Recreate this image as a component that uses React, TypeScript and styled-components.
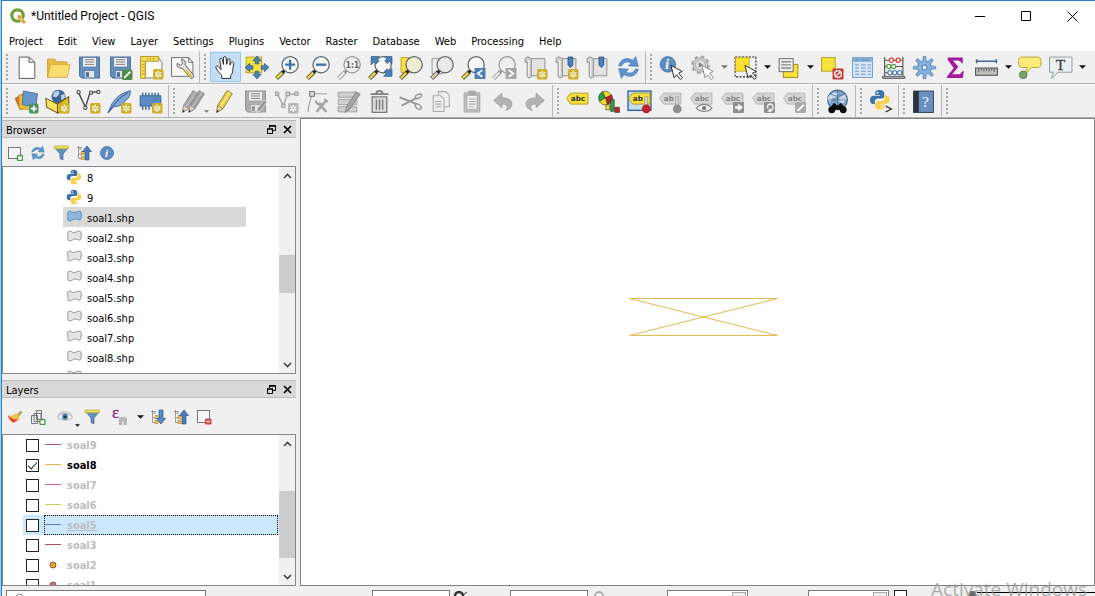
import React from "react";
import styled, { createGlobalStyle, css } from "styled-components";

const Global = createGlobalStyle`
  *, *::before, *::after { box-sizing: border-box; }
  body { margin: 0; background: #f0f0f0; overflow: hidden; }
  button, input { font: inherit; color: inherit; margin: 0; padding: 0; border: 0; background: none; }
  ul { list-style: none; margin: 0; padding: 0; }
  svg { display: block; flex: none; }
`;

/* ---------- layout ---------- */

const Desktop = styled.div`
  height: 100vh;
  padding-left: 1px;
  background: #9fd0f0;
  font: 11px/14px "DejaVu Sans Condensed", "DejaVu Sans", sans-serif;
  color: #000;
`;
const AppWindow = styled.div`
  position: relative;
  height: 100%;
  display: flex;
  flex-direction: column;
  background: #f0f0f0;
  border-left: 1px solid #2f80c4;
  border-top: 1px solid #2f7abf;
  overflow: hidden;
`;
const TitleBar = styled.header`
  flex: none;
  height: 30px;
  display: flex;
  align-items: center;
  gap: 5px;
  padding-left: 8px;
  background: #fff;
`;
const Title = styled.h1`
  flex: 1;
  margin: 0;
  font: 400 12px/16px Roboto, "Open Sans", sans-serif;
`;
const WindowButtons = styled.div`
  display: flex;
`;
const WindowButton = styled.button`
  width: 46px;
  height: 30px;
  display: grid;
  place-items: center;
`;
const MenuBar = styled.nav`
  flex: none;
  height: 19px;
  display: flex;
  align-items: center;
  gap: 15px;
  padding: 2px 0 0 7px;
  background: #fff;
`;
const ToolRow = styled.div`
  flex: none;
  height: 34px;
  display: flex;
  border-top: 1px solid #f8f8f8;
  border-bottom: 1px solid #b4b4b4;
`;
const Handle = styled.span`
  width: 10px;
  height: 28px;
  background: radial-gradient(circle, #a8a8a8 1px, transparent 1px) 3px 0 / 4px 4px repeat-y;
`;
const ToolGroup = styled.div<{ $last?: boolean; $tight?: boolean }>`
  display: flex;
  align-items: center;
  padding-right: ${(p) => (p.$tight ? 2 : 1)}px;
  border-right: ${(p) => (p.$last ? "0" : "1px solid #b8b8b8")};
  ${Handle} { width: ${(p) => (p.$tight ? 9 : 10)}px; }
`;
const ToolButton = styled.button<{ $on?: boolean }>`
  position: relative;
  width: 31px;
  height: 30px;
  display: grid;
  place-items: center;
  ${(p) => p.$on && css`background: #c4dff5; border: 1px solid #97c7ec;`}
`;
const ArrowButton = styled.button`
  width: 12px;
  height: 30px;
  display: grid;
  place-items: center;
`;
const CornerArrow = styled.span`
  position: absolute;
  right: 0;
  bottom: 3px;
`;
const Main = styled.main`
  flex: 1;
  min-height: 0;
  display: flex;
  gap: 4px;
`;
const DockColumn = styled.aside`
  flex: none;
  width: 294px;
  display: flex;
  flex-direction: column;
  gap: 6px;
  padding-top: 2px;
`;
const Dock = styled.section<{ $grow: number }>`
  flex: ${(p) => p.$grow} 1 0;
  min-height: 0;
  display: flex;
  flex-direction: column;
`;
const DockHeader = styled.div`
  flex: none;
  height: 18px;
  display: flex;
  align-items: center;
  padding: 0 1px 0 4px;
  background: #d9d9d9;
  border-top: 1px solid #b9b9b9;
  border-bottom: 1px solid #bdbdbd;
`;
const DockTitle = styled.h2`
  flex: 1;
  margin: 0;
  padding-top: 3px;
  font-size: 11px;
  line-height: 14px;
  font-weight: 400;
`;
const DockButton = styled.button`
  width: 16px;
  height: 16px;
  display: grid;
  place-items: center;
`;
const DockTools = styled.div<{ $h: number }>`
  flex: none;
  height: ${(p) => p.$h}px;
  display: flex;
  align-items: center;
  padding: 1px 0 0 1px;
`;
const SmallButton = styled.button<{ $wide?: boolean }>`
  position: relative;
  width: ${(p) => (p.$wide ? 31 : 23)}px;
  height: 26px;
  display: grid;
  place-items: center;
`;
const TreeFrame = styled.div`
  flex: 1;
  min-height: 0;
  display: flex;
  border: 1px solid #828790;
  background: #fff;
`;
const TreeList = styled.ul`
  flex: 1;
  overflow: hidden;
`;
const FileRow = styled.li<{ $selected?: boolean }>`
  height: 20px;
  width: 183px;
  margin-left: 60px;
  padding-left: 3px;
  display: flex;
  align-items: center;
  gap: 5px;
  background: ${(p) => (p.$selected ? "#d9d9d9" : "transparent")};
  span { padding-top: 3px; }
`;
const LayerRow = styled.li<{ $current?: boolean }>`
  height: 20px;
  margin-left: 20px;
  padding: 0 1px 0 3px;
  display: flex;
  align-items: center;
  gap: 5px;
  background: ${(p) => (p.$current ? "#cce8ff" : "transparent")};
`;
const LayerLabel = styled.label<{ $current?: boolean; $visible?: boolean }>`
  flex: 1;
  height: 20px;
  display: flex;
  align-items: center;
  gap: 6px;
  border: 1px ${(p) => (p.$current ? "dotted #000" : "solid transparent")};
  font-weight: 700;
  color: ${(p) => (p.$visible ? "#000" : "#bdbdbd")};
  text-decoration: ${(p) => (p.$current ? "underline" : "none")};
  span { padding-top: 2px; }
`;
const Check = styled.input`
  appearance: none;
  flex: none;
  width: 13px;
  height: 13px;
  border: 1px solid #222;
  background: #fff;
  display: grid;
  place-items: center;
  &:checked::after {
    content: "";
    width: 5px;
    height: 9px;
    margin-bottom: 3px;
    border: solid #222;
    border-width: 0 1px 1px 0;
    transform: rotate(42deg);
  }
`;
const Scroll = styled.div`
  flex: none;
  width: 16px;
  display: flex;
  flex-direction: column;
  align-items: center;
  padding: 6px 0 5px;
  background: #f0f0f0;
`;
const Track = styled.div<{ $before: number; $thumb: number; $after: number }>`
  flex: 1;
  width: 100%;
  display: grid;
  grid-template-rows: ${(p) => `${p.$before}fr ${p.$thumb}fr ${p.$after}fr`};
  &::before { content: ""; }
`;
const Thumb = styled.div`
  background: #cdcdcd;
`;
const Canvas = styled.section`
  position: relative;
  flex: 1;
  background: #fff;
  border: 1px solid #828282;
`;
const Feature = styled.svg`
  position: absolute;
  left: 328px;
  top: 178px;
`;
const StatusBar = styled.footer`
  flex: none;
  height: 10px;
  padding: 4px 0 0 4px;
  display: flex;
  align-items: flex-start;
  overflow: hidden;
`;
const Field = styled.input<{ $w: number; $gap?: number }>`
  flex: none;
  width: ${(p) => p.$w}px;
  height: 20px;
  margin-left: ${(p) => p.$gap || 0}px;
  background: #fff;
  border: 1px solid #7a7a7a;
`;
const Messages = styled.button`
  flex: 1;
  height: 18px;
  margin-top: 2px;
  border-top: 1px solid #000;
`;
const Spin = styled.div<{ $gap: number }>`
  flex: none;
  width: 81px;
  height: 20px;
  margin-left: ${(p) => p.$gap}px;
  display: flex;
  padding: 1px;
  background: #fff;
  border: 1px solid #7a7a7a;
  input { flex: 1; min-width: 0; }
  button { width: 14px; height: 10px; border: 1px solid #aaa; background: #eee; display: grid; place-items: center; }
`;
const StatusIcon = styled.span<{ $gap: number }>`
  flex: none;
  margin-left: ${(p) => p.$gap}px;
`;
const LocatorWrap = styled.label`
  flex: none;
  width: 200px;
  height: 20px;
  padding: 2px 8px;
  display: flex;
  background: #fff;
  border: 1px solid #7a7a7a;
  input { flex: 1; min-width: 0; }
`;
const Watermark = styled.div`
  position: absolute;
  right: 8px;
  bottom: -6px;
  font: 400 19px/26px "Open Sans", "Noto Sans", sans-serif;
  color: rgba(150, 150, 150, 0.75);
  pointer-events: none;
`;

/* ---------- shared icon parts ---------- */

type Kids = { children?: React.ReactNode };
const I = ({ children }: Kids) => (
  <svg width="25" height="25" viewBox="0 0 24 24" fill="none" aria-hidden="true">{children}</svg>
);
const S = ({ children }: Kids) => (
  <svg width="16" height="16" viewBox="0 0 16 16" fill="none" aria-hidden="true">{children}</svg>
);
const Down = ({ c = "#111", s = 7 }: { c?: string; s?: number }) => (
  <svg width={s} height={s === 7 ? 4 : 3} viewBox="0 0 8 4" aria-hidden="true"><path d="M0 0h8L4 4z" fill={c} /></svg>
);
const New = ({ gray }: { gray?: boolean }) => (
  <g>
    <rect x="13.500" y="13.500" width="10" height="10" rx="1.500" fill={gray ? "#b5b5b5" : "#cfb02a"} />
    <path d="M18.500 15v7M15.500 16.800l6 3.500M21.500 16.800l-6 3.500" stroke="#fff" strokeWidth="1.300" />
    <circle cx="18.500" cy="18.500" r="1" fill={gray ? "#b5b5b5" : "#cfb02a"} />
  </g>
);
const Lens = ({ handle = "#edd33c", ring = "#5d6468", fill = "#f6f8f8" }: { handle?: string; ring?: string; fill?: string }) => (
  <g>
    <path d="M1.500 22.500l6.500-6.500" stroke={ring === "#5d6468" ? "#555" : ring} strokeWidth="4" />
    <path d="M1.800 22.200l6.200-6.200" stroke={handle} strokeWidth="2.400" />
    <path d="M7 17l2.500-2.500" stroke={ring === "#5d6468" ? "#222" : ring} strokeWidth="2.800" />
    <circle cx="14.500" cy="9.300" r="7.800" fill={fill} stroke={ring} strokeWidth="1.200" />
  </g>
);
const Floppy = ({ c, d }: { c: string; d: string }) => (
  <g>
    <path d="M2.500 2h19v20H4.500l-2-2z" fill={c} stroke={d} />
    <rect x="5.500" y="2.500" width="13" height="9" fill="#f2f2f2" stroke={d} strokeWidth=".6" />
    <path d="M7.500 4.500h9M7.500 6.700h9M7.500 9h9" stroke="#777" strokeWidth=".9" />
    <rect x="7" y="15" width="10" height="7" fill="#e4e4e4" stroke={d} strokeWidth=".6" />
    <rect x="8.500" y="16.500" width="3" height="4.500" fill={d} />
  </g>
);
const Pencil = ({ c = "#e7cf3c", l = "#f6ea9a", e = "#8a7a20" }: { c?: string; l?: string; e?: string }) => (
  <g>
    <path d="M4.500 22.500l1-7L14.500 1.500l5 3L10.500 19z" fill={c} stroke={e} strokeWidth=".8" />
    <path d="M8 17L17 3.200" stroke={l} strokeWidth="1.500" />
    <path d="M4.500 22.500l1-7 5 3.500z" fill="#ddd2b8" stroke={e} strokeWidth=".6" />
    <path d="M4.500 22.500l.4-2.400 1.700 1z" fill="#222" />
  </g>
);
const Refresh = () => (
  <g fill="#5b93cd" stroke="#3f76b0" strokeWidth=".5">
    <path d="M2.500 10.500C4 4 10.500 1.500 16 5l3-3.500 2.500 9.500-9.500-.5 2.500-3C11 5.800 6.500 7 5.500 10.500z" />
    <path d="M21.500 13.500C20 20 13.500 22.500 8 19l-3 3.500L2.500 13l9.500.5-2.500 3c3.500 1.700 8 .5 9-3z" />
  </g>
);
const Python = () => (
  <g>
    <path d="M11.800 1C8 1 7 2.500 7 4.500v2.300h5.300v.8H5C2.700 7.600 1 9.500 1 12s1.500 4.800 3.500 4.800h2v-3.100c0-1.900 1.600-3.200 3.300-3.200h4.600c1.500 0 2.600-1.200 2.600-2.700V4.500c0-2-1.800-3.500-5.200-3.500z" fill="#3c74a8" />
    <path d="M12.200 23c3.800 0 4.800-1.500 4.800-3.500v-2.300h-5.300v-.8H19c2.300 0 4-1.900 4-4.400s-1.500-4.800-3.500-4.800h-2v3.100c0 1.900-1.600 3.200-3.300 3.200H9.600C8.100 13.500 7 14.700 7 16.200v3.300c0 2 1.800 3.500 5.200 3.500z" fill="#fbd148" />
    <circle cx="9.600" cy="4.200" r="1" fill="#fff" /><circle cx="14.400" cy="19.800" r="1" fill="#fff" />
  </g>
);
const Roll = () => (
  <g>
    <path d="M4.500 3.500H21V20H6z" fill="#e2e2e0" stroke="#8b8b8b" strokeWidth=".9" />
    <path d="M4.500 2C3 2 2 2.800 2 4v3h2v13c0 1.300.8 2 2 2s2-.7 2-2V4.500C8 3 6.500 2 4.500 2z" fill="#d0d0ce" stroke="#8b8b8b" strokeWidth=".9" />
    <path d="M5.500 5v15" stroke="#f3f3f3" strokeWidth="1.200" />
  </g>
);
const Mark = () => <path d="M13.500 2h4.500v7c0 1.300-1 1.500-2.250 3-1.250-1.500-2.250-1.700-2.250-3z" fill="#4a80bc" stroke="#29527e" strokeWidth=".9" />;
const Tag = ({ gray, word = "abc" }: { gray?: boolean; word?: string }) => (
  <g>
    <path d="M1.500 9l4-5h16.500v10.500H5.500z" fill={gray ? "#d6d6d6" : "#f4e13a"} stroke={gray ? "#b2b2b2" : "#b39c16"} strokeWidth=".9" />
    <text x="5.500" y="11.700" fontSize="7" fontWeight="700" fontFamily="DejaVu Sans, sans-serif" fill={gray ? "#868686" : "#333"}>{word}</text>
  </g>
);
const Pin = ({ c }: { c: string }) => <g><path d="M17 7.500v8h2.500v-8z" fill="#ddd" stroke="#888" strokeWidth=".6" /><circle cx="18.500" cy="19" r="4.200" fill={c} /></g>;
const Cursor = ({ c = "#222" }: { c?: string }) => <path d="M11.500 10l3 12 2.400-3 3.600 4.500 2-1.700-3.700-4.500 3.500-1.500z" fill="#fff" stroke={c} strokeWidth=".9" />;
const Arrow8 = ({ d }: { d: string }) => <path d={d} fill="#4c7fb3" stroke="#2e5c8a" strokeWidth=".7" />;

/* ---------- toolbar icons ---------- */

const icons: Record<string, React.ReactNode> = {
  new: <path d="M4 2h9.500L19 7v15.500H4zM13.500 2v5H19" fill="#fff" stroke="#555" strokeWidth=".9" />,
  open: <g><path d="M1.500 21.500V4h7L10 6.500h10v3H4.500z" fill="#e9bd48" stroke="#c99a2c" strokeWidth=".8" /><path d="M1.500 21.500L4.500 9h18.500l-2.500 12.500z" fill="#fbdc70" stroke="#d2a838" strokeWidth=".8" /></g>,
  save: <Floppy c="#6490bf" d="#476f9b" />,
  saveAs: <g><Floppy c="#6490bf" d="#476f9b" /><rect x="13.500" y="14" width="10" height="10" rx="1.500" fill="#4e8a4b" /><path d="M15.500 22l6-6" stroke="#fff" strokeWidth="1.800" /></g>,
  layout: <g><path d="M6 3h13l3 4v15H6z" fill="#fff" stroke="#666" strokeWidth=".8" /><path d="M1.500 1.500H19V6H6v16.500H1.500z" fill="#f5dc57" stroke="#b39521" strokeWidth=".9" /><path d="M3 6h2M3 9h2M3 12h2M3 15h2M3 18h2M8 3v2M11 3v2M14 3v2" stroke="#a3861d" strokeWidth=".7" /><New /></g>,
  layouts: <g><path d="M1.500 2.500H18l4 4.500v13.500h-20.500z" fill="#fafafa" stroke="#555" strokeWidth=".8" /><path d="M18 2.500V7h4" stroke="#555" strokeWidth=".8" /><path d="M11 4c3 0 4.500 3 3.500 5.500l8 9.500c1.300 2-1.200 4.500-3 3l-8-9.500C8 13 6 10.500 7 8l3 2 2-2z" fill="#e2e2e2" stroke="#555" strokeWidth=".9" /><path d="M15 14.500l6 7" stroke="#dcc64a" strokeWidth="2.700" /></g>,
  hand: <path d="M8.500 22.500v-3C6 17.500 4 14.500 2.800 12.300c-.7-1.500 1.300-2.500 2.300-1.200L7.800 14 6.500 4.500C6.300 2.700 8.500 2.500 8.900 4.200L10 9V2.800c0-1.800 2.500-1.800 2.600 0L13.200 9l.8-4.500c.3-1.600 2.500-1.300 2.400.4L16.200 9.700l1.400-2.500c.8-1.500 2.600-.6 2.200.9L19 14c0 2.500-.8 4.500-2 5.500v3z" fill="#fff" stroke="#222" strokeWidth=".9" />,
  panSel: <g><rect x="2" y="2" width="15" height="15" fill="#f5e23e" stroke="#b09a1a" strokeWidth=".8" /><Arrow8 d="M12.500 1l4 4.500h-2.300v3h-3.400v-3H8.500zM12.500 23l4-4.500h-2.300v-3h-3.400v3H8.500zM1 12l4.500-4v2.300h3v3.400h-3V16zM24 12l-4.500-4v2.300h-3v3.400h3V16z" /></g>,
  zoomIn: <g><Lens /><path d="M14.500 4.500v9.600M9.700 9.300h9.600" stroke="#3f74ad" strokeWidth="2.200" /></g>,
  zoomOut: <g><Lens /><path d="M9.500 9.300h10" stroke="#3f74ad" strokeWidth="2.300" /></g>,
  zoomNative: <g><Lens handle="#eee" ring="#999" fill="#eee" /><text x="8.500" y="12.500" fontSize="8" fontWeight="700" fontFamily="DejaVu Sans Condensed, sans-serif" fill="#666">1:1</text></g>,
  zoomFull: <g><Lens /><Arrow8 d="M3 1.500h8L8.700 3.700l2 2-3 3-2-2L3 9.500zM23 1.500h-7l2 2.200-2 2 2.500 2.500 2-2L23 8.500zM23 20.500h-8l2.300-2.200-2-2 3-3 2 2 2.700-2.300z" /></g>,
  zoomSel: <g><path d="M2 2.500h10V17H2z" fill="#f5e23e" stroke="#b09a1a" strokeWidth=".8" /><Lens fill="#efecd2" /></g>,
  zoomLayer: <g><path d="M2 3.500h10V18H2z" fill="#eee" stroke="#888" strokeWidth=".8" /><Lens handle="#e3cfae" fill="#e9e9e9" /></g>,
  zoomLast: <g><Lens /><rect x="13" y="12.500" width="10.500" height="10.500" fill="#4b7db5" /><path d="M20.500 14.500l-4.500 3.200 4.500 3.200" stroke="#fff" strokeWidth="1.700" /></g>,
  zoomNext: <g><Lens handle="#eee" ring="#999" fill="#eee" /><rect x="13" y="12.500" width="10.500" height="10.500" fill="#a5a5a5" /><path d="M16 14.500l4.500 3.200-4.500 3.200" stroke="#fff" strokeWidth="1.700" /></g>,
  newMap: <g><Roll /><New /></g>,
  newBook: <g><Roll /><Mark /><New /></g>,
  books: <g><Roll /><Mark /></g>,
  refresh: <Refresh />,
  identify: <g><circle cx="8.500" cy="9" r="7.500" fill="#5c8cc4" stroke="#3f6ca0" strokeWidth=".6" /><text x="6" y="13.500" fontSize="13" fontStyle="italic" fontWeight="700" fontFamily="Liberation Serif, serif" fill="#fff">i</text><Cursor /></g>,
  action: <g><circle cx="10" cy="9.500" r="8" stroke="#a8a8a8" strokeWidth="2" strokeDasharray="3.500 2.783" /><circle cx="10" cy="9.500" r="7" fill="#d2d2d2" stroke="#a0a0a0" strokeWidth=".9" /><circle cx="10" cy="9.500" r="4.800" fill="#e2e2e2" stroke="#a0a0a0" strokeWidth=".9" /><path d="M8.300 6.800l4.500 2.700-4.500 2.700z" fill="#888" /><Cursor c="#888" /></g>,
  select: <g><rect x="2" y="2" width="20" height="19" stroke="#222" strokeDasharray="2 1.300" /><rect x="2.500" y="2.500" width="13" height="13" fill="#f7df2b" stroke="#b19a18" strokeWidth=".6" /><Cursor /></g>,
  selectForm: <g><rect x="7" y="9" width="14" height="12.500" fill="#f7e13a" stroke="#a08c15" strokeWidth=".9" /><rect x="3" y="3.500" width="13.500" height="12.500" fill="#eef0f0" stroke="#666" strokeWidth=".9" /><path d="M5 6.500h9.500M5 9.500h9.500M5 12.500h9.500" stroke="#888" strokeWidth="1.300" /></g>,
  deselect: <g><rect x="2.500" y="2.500" width="13" height="13" fill="#f8e33c" stroke="#b39b18" strokeWidth=".9" /><rect x="13" y="13" width="10.500" height="10.500" rx="1" fill="#cf3439" /><circle cx="18.250" cy="18.250" r="3.200" stroke="#fff" strokeWidth="1.300" /><path d="M16 20.500l4.500-4.500" stroke="#fff" strokeWidth="1.300" /></g>,
  table: <g><rect x="2.500" y="2.500" width="19" height="19" fill="#d8e7f5" stroke="#6f97c0" strokeWidth=".9" /><path d="M3 4.800h18" stroke="#85b0dc" strokeWidth="3.600" /><path d="M5 4.800h3M11 4.800h7" stroke="#5a86b5" /><path d="M5 9.500h3.500M10.500 9.500H15M17 9.500h3M5 12.500h3.500M10.500 12.500H15M17 12.500h3M5 15.500h3.500M10.500 15.500H15M17 15.500h3M5 18.500h3.500M10.500 18.500H15M17 18.500h3" stroke="#6f97c0" /></g>,
  abacus: <g><path d="M3.500 2v20M21 2v20M3 5h18M3 11h18M3 17h18" stroke="#555" strokeWidth="1.100" /><path d="M1.500 20.500H23v2H1.500z" fill="#aaa" stroke="#555" strokeWidth=".8" /><g fill="#fff" strokeWidth="1.200"><g stroke="#d33"><circle cx="10" cy="5" r="2" /><circle cx="16.500" cy="5" r="2" /></g><g stroke="#5a9a4c"><circle cx="7.500" cy="11" r="2" /><circle cx="12" cy="11" r="2" /></g><g stroke="#5b7fae"><circle cx="8.500" cy="17" r="2" /><circle cx="13.200" cy="17" r="2" /><circle cx="18" cy="17" r="2" /></g></g></g>,
  gear: <g><path d="M12 2.500v19M2.500 12h19M5.300 5.300l13.400 13.400M18.700 5.300L5.300 18.700" stroke="#5584b6" strokeWidth="3.600" strokeLinecap="round" /><circle cx="12" cy="12" r="7" fill="#5584b6" /><path d="M12 2.500v19M2.500 12h19M5.300 5.300l13.400 13.400M18.700 5.300L5.300 18.700" stroke="#84b1df" strokeWidth="2.200" strokeLinecap="round" /><circle cx="12" cy="12" r="6.200" fill="#84b1df" /><circle cx="12" cy="12" r="2.300" fill="#f0f0f0" stroke="#5584b6" /></g>,
  sigma: <path d="M4.500 2.500H19V8h-1.300c-.5-2-1.500-2.700-4-2.700H9.500l5.300 6L8.800 18.500h5.500c2.500 0 3.500-1 4.200-3H20L19 22H4V20.500l6.300-8L4.500 4.500z" fill="#a3189d" />,
  ruler: <g><path d="M2 6h20M2.500 4v4M21.500 4v4" stroke="#45658c" strokeWidth="1.500" /><rect x="1.500" y="12.500" width="21" height="7" fill="#bdbdb9" stroke="#555" /><path d="M4.500 13v3M7 13v2M9.500 13v3M12 13v2M14.500 13v3M17 13v2M19.500 13v3" stroke="#444" strokeWidth=".8" /></g>,
  tip: <g><path d="M5 2h14.500c3 0 3.500 1.500 3.500 4.500s0 5.500-3.500 5.500H14l-6.500 7 2.500-7H5c-3 0-3.500-2-3.500-5.500S2 2 5 2z" fill="#fbea7c" stroke="#b9a02c" strokeWidth=".9" /><circle cx="6" cy="19" r="3.700" fill="#7aa36e" stroke="#4f7a46" strokeWidth=".8" /></g>,
  text: <g><path d="M1.500 2H23v14.500H9.500L3.500 22.500l1.500-6H1.500z" fill="#eaf1f3" stroke="#8f999e" strokeWidth=".9" /><text x="7.500" y="14" fontSize="15" fontFamily="Liberation Serif, serif" fill="#444" stroke="#444" strokeWidth=".3">T</text></g>,
  dsm: <g><path d="M1 9l9-5 5 12-9 4z" fill="#d86a2b" stroke="#a34b18" strokeWidth=".6" /><path d="M4.500 5.500l11 1V20L5 19z" fill="#e7bd35" stroke="#b08c20" strokeWidth=".6" /><path d="M9 2l13.500 2.500-1.500 13L8 15z" fill="#6a97ca" stroke="#426c9d" strokeWidth=".8" /><rect x="14.500" y="14" width="9" height="9.500" rx="1.500" fill="#4f9467" /><path d="M19 16v5.500M16.200 18.750h5.600" stroke="#fff" strokeWidth="1.700" /></g>,
  gpkg: <g><circle cx="13" cy="7.500" r="6.800" fill="#3f6595" /><path d="M8.500 3l4.500-1.500 1 3-3 3.500-3.500-.5zM15 6l4-1.500v4l-3 2.500z" fill="#b9cfe3" /><path d="M.8 9L12 14.500V23L1.500 17.500z" fill="#f8e163" stroke="#6d5a10" /><path d="M12 14.500L22.800 7.500v9L12 23z" fill="#e8c320" stroke="#6d5a10" /><New /></g>,
  shp: <g><path d="M2.500 3.500l6.500 14 4.500-14 8.500-1" stroke="#444" strokeWidth="1.300" /><g fill="#eee" stroke="#444"><circle cx="2.500" cy="3" r="1.600" /><circle cx="9" cy="18" r="1.600" /><circle cx="14.500" cy="3.500" r="1.600" /><circle cx="21.500" cy="2.700" r="1.600" /></g><New /></g>,
  feather: <g><path d="M1 23C4 15 7 6 22.500 1.500c0 5-2 8-5 9.500-1 3-5 6-11 6z" fill="#7fa9d6" stroke="#3d689a" strokeWidth=".9" /><path d="M1 23C6 15 12 8 20 3.500" stroke="#35608f" /><New /></g>,
  chip: <g><rect x="2" y="6.500" width="20" height="10" fill="#5b8ac3" stroke="#35608f" strokeWidth=".8" /><path d="M4.500 3.500v3M7.500 3.500v3M10.500 3.500v3M13.500 3.500v3M16.500 3.500v3M19.500 3.500v3M4.500 17v3M7.500 17v3M10.500 17v3" stroke="#35608f" strokeWidth="1.300" /><New /></g>,
  edits: <g><g transform="translate(-3 0)"><Pencil c="#a6a6a6" l="#bbb" e="#8c8c8c" /></g><g transform="translate(3 0)"><Pencil c="#9e9e9e" l="#bbb" e="#8c8c8c" /></g></g>,
  pencil: <Pencil />,
  saveEdit: <g><Floppy c="#adadad" d="#939393" /><path d="M13 22.500l1-4 6-8 3 2-6 8z" fill="#999" stroke="#eee" strokeWidth=".6" /></g>,
  addLine: <g><path d="M3 4.500l6 11.500 4-11h9" stroke="#a5a5a5" strokeWidth="1.300" /><g fill="#ddd" stroke="#999"><rect x="1.500" y="3" width="3" height="3" /><rect x="11.500" y="3" width="3.500" height="3.500" /><rect x="20" y="3" width="3" height="3" /><rect x="7.500" y="14.500" width="3" height="3" /></g><New gray /></g>,
  vertex: <g><path d="M3 22c0-6 2-11 4-17.500M7 4.500h14" stroke="#999" /><rect x="4.500" y="2.500" width="4.500" height="4.500" fill="#ddd" stroke="#777" /><path d="M11 22l9.500-11M20.500 22L13 13.500" stroke="#a8a8a8" strokeWidth="2.600" /><path d="M10.500 11c0 4 3.500 4.500 5 2.500M18.500 9.500l3.500 3" stroke="#a0a0a0" strokeWidth="1.800" /></g>,
  multi: <g><path d="M2 3h18v5H2zM2 10h18v5H2zM2 17h18v5H2z" fill="#cfcfcf" stroke="#999" strokeWidth=".8" /><path d="M9 22l1.500-5.500L19.500 3l3.500 2-9.500 13.500z" fill="#aaa" stroke="#888" /></g>,
  trash: <g stroke="#7d7d7d"><path d="M5 7.500h14v15H5z" fill="#ddd" strokeWidth="1.300" /><path d="M3.500 5h17M9 4.500c0-3.500 6-3.500 6 0" strokeWidth="1.700" /><path d="M9 10v10M12 10v10M15 10v10" strokeWidth="1.400" /></g>,
  cut: <g stroke="#9a9a9a" strokeWidth="1.400"><path d="M1.500 8L18 14.500M3.500 16L18 8.500" strokeWidth="2" /><ellipse cx="19.500" cy="7" rx="3.300" ry="1.800" transform="rotate(-25 19.500 7)" /><ellipse cx="19.500" cy="17" rx="3.300" ry="2" transform="rotate(35 19.500 17)" /></g>,
  copy: <g fill="#eee" stroke="#aaa"><path d="M9 2.500h7l3.500 3.500v11H9z" /><path d="M4 6.500h7l3.500 3V21.500H4z" /><path d="M6 12h6M6 14.500h6M6 17h6" /></g>,
  paste: <g stroke="#aaa"><rect x="4" y="3.500" width="15" height="18.500" rx="1" fill="#bfbfbf" /><path d="M6.500 6h10v13.500h-10z" fill="#f0f0f0" /><path d="M8.500 2h6v3.500h-6z" fill="#aaa" /><path d="M8.500 9.500H15M8.500 12H15M8.500 14.500H15M8.500 17H13" /></g>,
  undo: <path d="M2.500 11l8-7v4.500c7 0 10 3 9.500 6.500-.3 3-3 5-6 5.500 3-3 2-6-3.500-6v3.500z" fill="#b2b2b2" stroke="#9b9b9b" strokeWidth=".7" />,
  redo: <path d="M21.500 11l-8-7v4.500c-7 0-10 3-9.500 6.500.3 3 3 5 6 5.500-3-3-2-6 3.500-6v3.500z" fill="#b2b2b2" stroke="#9b9b9b" strokeWidth=".7" />,
  label: <Tag />,
  diagram: <g><path d="M9 8.500L3.500 12A6.500 6.500 0 0 1 6.500 2.500z" fill="#2fa03c" stroke="#222" strokeWidth=".5" /><path d="M9 8.500l-2.500-6A6.500 6.500 0 0 1 15 7z" fill="#f2dc2b" stroke="#222" strokeWidth=".5" /><path d="M9 8.500L15 5.500a6.500 6.500 0 0 1-4 9.500z" fill="#c51f26" stroke="#222" strokeWidth=".5" /><path d="M9 8.500l2 6.500a6.500 6.500 0 0 1-7.500-3z" fill="#f2dc2b" stroke="#222" strokeWidth=".5" /><path d="M9.500 15h3.500v5H9.500z" fill="#f2dc2b" stroke="#222" strokeWidth=".5" /><path d="M14 10h3.500v11.500H14z" fill="#26a33a" stroke="#222" strokeWidth=".5" /><path d="M18 17.500h4.500V22.500H18z" fill="#c51f26" stroke="#222" strokeWidth=".5" /></g>,
  pinned: <g><rect x="1" y="2" width="22" height="18.500" stroke="#2c63a0" strokeWidth="1.300" fill="#c5dcee" /><Tag word="ab" /><Pin c="#c02326" /></g>,
  pin: <g><Tag gray word="ab" /><Pin c="#8f8f8f" /></g>,
  showHide: <g><Tag gray /><path d="M7 18.500c4-5 11-5 15 0-4 4-11 4-15 0z" fill="#eee" stroke="#888" /><circle cx="14.500" cy="18.300" r="2" fill="#777" /></g>,
  moveLabel: <g><Tag gray /><rect x="12.500" y="12.500" width="10.500" height="10.500" rx="1" fill="#8f8f8f" /><path d="M14.500 16.500h3v-2.500l4.500 3.700-4.500 3.700V19h-3z" fill="#fff" /></g>,
  rotateLabel: <g><Tag gray /><rect x="12.500" y="12.500" width="10.500" height="10.500" rx="1" fill="#8f8f8f" /><path d="M16.500 18.500c-2.500-3 2-5.500 4-3s0 5.500-3.500 5.500l1.500-2M17 21l2.500 1" stroke="#fff" strokeWidth="1.300" /></g>,
  changeLabel: <g><Tag gray /><rect x="12.500" y="12.500" width="10.500" height="10.500" rx="1" fill="#aaa" /><path d="M15 21l6-6" stroke="#fff" strokeWidth="1.700" /></g>,
  metasearch: <g><circle cx="12" cy="10.500" r="9.500" fill="#7ba0c6" stroke="#3d6288" /><path d="M4 6l5-3 4 1-2 4-4 1-2 4-3-3zM14 8l5-3 2 5-4 4-4-2z" fill="#c7d9e8" /><path d="M12 1v19M2.500 10.500h19M5 4.500c4 3 10 3 14 0" stroke="#3d6288" strokeWidth=".6" /><path d="M4 20l4-6c1-1 2.500 0 3 1.500h2c.5-1.500 2-2.500 3-1.500l4 6z" fill="#0a0a0a" /><circle cx="6.500" cy="20" r="3.300" fill="#0a0a0a" /><circle cx="17.500" cy="20" r="3.300" fill="#0a0a0a" /></g>,
  python: <g><g transform="translate(1 0) scale(.86)"><Python /></g><path d="M17 16.500l5.500 2.700-5.500 2.700" stroke="#333" strokeWidth="1.300" /></g>,
  help: <g><rect x="2.500" y="2" width="19" height="20.500" fill="#6790c0" stroke="#3a4656" /><path d="M2.500 2h5v20.500h-5z" fill="#2a333e" /><text x="10.500" y="17.500" fontSize="15" fontFamily="Liberation Serif, serif" fill="#fff">?</text></g>,
};

/* ---------- small panel icons ---------- */

const funnel = <S><path d="M2 3h13l-5 6v6l-3-1.500V9z" fill="#6390c2" stroke="#3f6a9a" strokeWidth=".7" /><rect x="1" y="1" width="14.500" height="2.800" rx="1" fill="#f3e356" stroke="#a8972a" strokeWidth=".6" /></S>;
const treeBits = <><path d="M2.500 1v12.500H6M2.500 4H6M2.500 9H6M1 2.500h5" stroke="#888" strokeWidth=".8" /><path d="M5 6.500h3v3H5zM5 11.500h3v3H5z" fill="#f1c351" stroke="#b98a28" strokeWidth=".7" /></>;
const collapse = <S>{treeBits}<path d="M11 1l4.500 5.500H13V15H9V6.500H6.500z" fill="#4c7db6" stroke="#2c578a" strokeWidth=".7" /></S>;
const expand = <S>{treeBits}<path d="M11 15l4.500-5.500H13V1H9v8.500H6.500z" fill="#5b8cc2" stroke="#2c578a" strokeWidth=".7" /></S>;
const info = <S><circle cx="8" cy="8" r="6.500" fill="#5c8cc4" stroke="#41699b" strokeWidth=".7" /><text x="6" y="12" fontSize="11" fontStyle="italic" fontWeight="700" fontFamily="Liberation Serif, serif" fill="#fff">i</text></S>;
const addBox = <S><rect x="1.500" y="2.500" width="12" height="11" fill="#f6f6f6" stroke="#777" /><rect x="10.500" y="10.500" width="5" height="5" rx="1" fill="#fff" stroke="#4d934a" strokeWidth="1.400" /></S>;
const removeBox = <S><rect x="1.500" y="1.500" width="12" height="12" fill="#f6f6f6" stroke="#777" /><rect x="9" y="9.500" width="6.500" height="6" rx="1" fill="#d8444b" /><path d="M10.500 12.500h3.500" stroke="#fff" strokeWidth="1.300" /></S>;
const smallRefresh = <svg width="16" height="16" viewBox="0 0 24 24" aria-hidden="true"><Refresh /></svg>;
const brush = <S><path d="M9.500 6.500l4-4.500 1.500 1.500-4 4.500z" fill="#d9b25c" stroke="#9b7427" strokeWidth=".6" /><path d="M1 6.500c3 1 5.500-.5 7.500-2L13 8.500c-2 3-4 5-7 5C3.500 12 1.500 9.500 1 6.500z" fill="#f2c24c" /><path d="M1 6.500c3 2.500 6 4.500 10 4-1.500 2-3 3-5 3C3.500 12 1.500 9.500 1 6.500z" fill="#dd4a3f" /></S>;
const group = <S><path d="M1.500 6.500h6v8h-6zM4 4.500h7v8H4zM6.500 1.500h5v9h-5z" stroke="#667" strokeWidth=".9" /><rect x="10" y="10.500" width="5" height="5" rx="1" fill="#fff" stroke="#4d934a" strokeWidth="1.300" /></S>;
const eye = <S><path d="M.5 8C4 3.500 12 3.500 15.500 8c-3.500 4-11.500 4-15 0z" fill="#fff" stroke="#999" strokeWidth=".9" /><path d="M1 5.500C5 2 11 2 15 5.500" stroke="#aaa" strokeWidth=".8" /><circle cx="8" cy="7.800" r="3" fill="#5980ac" /><circle cx="8" cy="7.800" r="1.200" fill="#1d2b3b" /></S>;
const epsilon = (
  <svg width="18" height="26" viewBox="0 -6 18 26" fill="none" aria-hidden="true">
    <text x="2" y="8" fontSize="17" fontFamily="Liberation Serif, serif" fill="#7a3a75" stroke="#7a3a75" strokeWidth=".4">ε</text>
    <path d="M9.500 14.500V8.500c0-1.500 7-1.500 7 0v6H14V10h-2v4.500z" fill="#bbb" stroke="#999" strokeWidth=".6" />
  </svg>
);

const Polygon = ({ on }: { on?: boolean }) => (
  <S><path d="M2.500 2.500c2.500-1.300 3.500 1.500 6 1s4.500-2 6-1c1.300 1 1 7-.3 8.300-1.500 1-3-1-5.200-.8-2.500.3-4 2.700-6.500 1.700-1.700-1-.5-2.800-.5-4.300S.8 3.500 2.500 2.500z" fill={on ? "#8db7df" : "#e4e4e4"} stroke={on ? "#5a86b2" : "#8d8d8d"} strokeWidth=".9" /></S>
);
const SmallPython = () => <svg width="16" height="16" viewBox="0 0 24 24" aria-hidden="true"><Python /></svg>;
const Chevron = ({ up }: { up?: boolean }) => (
  <svg width="9" height="6" viewBox="0 0 9 6" fill="none" aria-hidden="true"><path d={up ? "M1 5l3.500-3.500L8 5" : "M1 1l3.500 3.500L8 1"} stroke="#444" strokeWidth="1.600" /></svg>
);

/* ---------- data ---------- */

const menus = ["Project", "Edit", "View", "Layer", "Settings", "Plugins", "Vector", "Raster", "Database", "Web", "Processing", "Help"];

// "v" is a drop-down arrow for the tool before it, "V" the same arrow disabled.
const topRow: string[][] = [
  ["new", "open", "save", "saveAs", "layout", "layouts"],
  ["hand", "panSel", "zoomIn", "zoomOut", "zoomNative", "zoomFull", "zoomSel", "zoomLayer", "zoomLast", "zoomNext", "newMap", "newBook", "books", "refresh"],
  ["identify", "action", "V", "select", "v", "selectForm", "v", "deselect", "table", "abacus", "gear", "sigma", "ruler", "v", "tip", "text", "v"],
];
const bottomRow: string[][] = [
  ["dsm", "gpkg", "shp", "feather", "chip"],
  ["edits", "pencil", "saveEdit", "addLine", "vertex", "multi", "trash", "cut", "copy", "paste", "undo", "redo"],
  ["label", "diagram", "pinned", "pin", "showHide", "moveLabel", "rotateLabel", "changeLabel"],
  ["metasearch"],
  ["python"],
  ["help"],
  [],
];
const files = ["8", "9", "soal1.shp", "soal2.shp", "soal3.shp", "soal4.shp", "soal5.shp", "soal6.shp", "soal7.shp", "soal8.shp", ""];
const layers: { name: string; color: string; point?: boolean; visible?: boolean; current?: boolean }[] = [
  { name: "soal9", color: "#b5566b" },
  { name: "soal8", color: "#e0b54c", visible: true },
  { name: "soal7", color: "#c4659a" },
  { name: "soal6", color: "#c9cc5c" },
  { name: "soal5", color: "#5f83cc", current: true },
  { name: "soal3", color: "#b0525f" },
  { name: "soal2", color: "#efa32e", point: true },
  { name: "soal1", color: "#cf6a88", point: true },
];

const Tools = ({ groups, tight }: { groups: string[][]; tight?: boolean }) => (
  <ToolRow role="toolbar">
    {groups.map((g, gi) => (
      <ToolGroup key={gi} $last={gi === groups.length - 1} $tight={tight}>
        <Handle />
        {g.map((n, i) =>
          n.toLowerCase() === "v" ? (
            <ArrowButton key={i} aria-label="More options"><Down c={n === "V" ? "#777" : "#111"} /></ArrowButton>
          ) : (
            <ToolButton key={i} aria-label={n} $on={n === "hand"}>
              <I>{icons[n]}</I>
              {n === "edits" && <CornerArrow><Down c="#777" s={5} /></CornerArrow>}
            </ToolButton>
          )
        )}
      </ToolGroup>
    ))}
  </ToolRow>
);

const DockBar = ({ title }: { title: string }) => (
  <DockHeader>
    <DockTitle>{title}</DockTitle>
    <DockButton aria-label={`Float ${title}`}>
      <svg width="9" height="9" viewBox="0 0 9 9" fill="none"><path d="M2.500 3V.5h6v5H6M.5 3.500v5h5v-5" stroke="#000" /><path d="M2 1h7M0 4h6" stroke="#000" strokeWidth="1.500" /></svg>
    </DockButton>
    <DockButton aria-label={`Close ${title}`}>
      <svg width="9" height="9" viewBox="0 0 9 9"><path d="M1 1l7 7M8 1L1 8" stroke="#000" strokeWidth="1.700" /></svg>
    </DockButton>
  </DockHeader>
);

export default function App() {
  return (
    <Desktop>
      <Global />
      <AppWindow>
        <TitleBar>
          <svg width="16" height="16" viewBox="0 0 16 16" fill="none" aria-hidden="true">
            <circle cx="7.500" cy="7.500" r="5.700" stroke="#6fa03a" strokeWidth="3.200" />
            <path d="M7.500 7h4l-.5 2 5 5-2 2-5-5-1.500.5z" fill="#ee8a2e" stroke="#fff" strokeWidth=".5" />
            <path d="M10.500 10.500l2 2" stroke="#f3d13c" strokeWidth="2" />
          </svg>
          <Title>*Untitled Project - QGIS</Title>
          <WindowButtons>
            <WindowButton aria-label="Minimize"><svg width="11" height="11"><path d="M0 5.500h10" stroke="#000" /></svg></WindowButton>
            <WindowButton aria-label="Maximize"><svg width="11" height="11"><path d="M.5.500h9v9h-9z" fill="none" stroke="#000" /></svg></WindowButton>
            <WindowButton aria-label="Close"><svg width="11" height="11"><path d="M.5.500l10 10M10.500.500l-10 10" stroke="#000" /></svg></WindowButton>
          </WindowButtons>
        </TitleBar>
        <MenuBar>{menus.map((m) => <button key={m}>{m}</button>)}</MenuBar>
        <Tools groups={topRow} />
        <Tools groups={bottomRow} tight />
        <Main>
          <DockColumn>
            <Dock $grow={254}>
              <DockBar title="Browser" />
              <DockTools $h={28}>
                <SmallButton aria-label="Add layer">{addBox}</SmallButton>
                <SmallButton aria-label="Refresh">{smallRefresh}</SmallButton>
                <SmallButton aria-label="Filter">{funnel}</SmallButton>
                <SmallButton aria-label="Collapse all">{collapse}</SmallButton>
                <SmallButton aria-label="Properties">{info}</SmallButton>
              </DockTools>
              <TreeFrame>
                <TreeList>
                  {files.map((f, i) => (
                    <FileRow key={f} $selected={i === 2}>
                      {i < 2 ? <SmallPython /> : <Polygon on={i === 2} />}
                      <span>{f}</span>
                    </FileRow>
                  ))}
                </TreeList>
                <Scroll><Chevron up /><Track $before={76} $thumb={38} $after={69}><Thumb /></Track><Chevron /></Scroll>
              </TreeFrame>
            </Dock>
            <Dock $grow={206}>
              <DockBar title="Layers" />
              <DockTools $h={36}>
                <SmallButton aria-label="Layer styling">{brush}</SmallButton>
                <SmallButton aria-label="Add group">{group}</SmallButton>
                <SmallButton $wide aria-label="Map themes">{eye}<CornerArrow><Down s={5} /></CornerArrow></SmallButton>
                <SmallButton aria-label="Filter legend">{funnel}</SmallButton>
                <SmallButton $wide aria-label="Filter by expression">{epsilon}</SmallButton>
                <ArrowButton aria-label="Filter options"><Down /></ArrowButton>
                <SmallButton aria-label="Expand all">{expand}</SmallButton>
                <SmallButton aria-label="Collapse all">{collapse}</SmallButton>
                <SmallButton aria-label="Remove layer">{removeBox}</SmallButton>
              </DockTools>
              <TreeFrame>
                <TreeList>
                  {layers.map((l) => (
                    <LayerRow key={l.name} $current={l.current}>
                      <Check type="checkbox" id={l.name} defaultChecked={l.visible} />
                      <LayerLabel htmlFor={l.name} $current={l.current} $visible={l.visible}>
                        <S>{l.point ? <circle cx="8" cy="8" r="3" fill={l.color} stroke="#7a5a3a" /> : <path d="M0 7.500h16" stroke={l.color} />}</S>
                        <span>{l.name}</span>
                      </LayerLabel>
                    </LayerRow>
                  ))}
                </TreeList>
                <Scroll><Chevron up /><Track $before={44} $thumb={67} $after={16}><Thumb /></Track><Chevron /></Scroll>
              </TreeFrame>
            </Dock>
          </DockColumn>
          <Canvas aria-label="Map canvas">
            <Feature width="150" height="40" viewBox="0 0 150 40" fill="none">
              <path d="M.5 1.500h148L.5 38.500h148z" stroke="#e2bb55" />
            </Feature>
          </Canvas>
        </Main>
        <StatusBar>
          <LocatorWrap>
            <svg width="9" height="9" viewBox="0 0 9 9" fill="none"><circle cx="4.500" cy="4.500" r="3.500" stroke="#888" /></svg>
            <input aria-label="Locator" />
          </LocatorWrap>
          <Field $w={78} $gap={166} aria-label="Coordinate" />
          <StatusIcon $gap={4}><svg width="14" height="14" viewBox="0 0 14 14" fill="none"><circle cx="5" cy="6" r="4" stroke="#333" strokeWidth="2.500" /><path d="M8 6l5-4" stroke="#333" /></svg></StatusIcon>
          <Field $w={78} $gap={42} aria-label="Scale" />
          <StatusIcon $gap={6}><svg width="10" height="14" viewBox="0 0 10 14" fill="none"><circle cx="5" cy="6" r="4" stroke="#999" strokeWidth="1.500" /></svg></StatusIcon>
          <Spin $gap={63}><input aria-label="Magnifier" /><button aria-label="Increase magnifier"><Down s={5} /></button></Spin>
          <Spin $gap={60}><input aria-label="Rotation" /><button aria-label="Increase rotation"><Down s={5} /></button></Spin>
          <StatusIcon $gap={5}><Check type="checkbox" aria-label="Render" /></StatusIcon>
          <StatusIcon $gap={61}><svg width="9" height="14" viewBox="0 0 9 14"><circle cx="4.500" cy="5" r="4" fill="#666" /></svg></StatusIcon>
          <Messages aria-label="Messages" />
        </StatusBar>
        <Watermark>Activate Windows</Watermark>
      </AppWindow>
    </Desktop>
  );
}
